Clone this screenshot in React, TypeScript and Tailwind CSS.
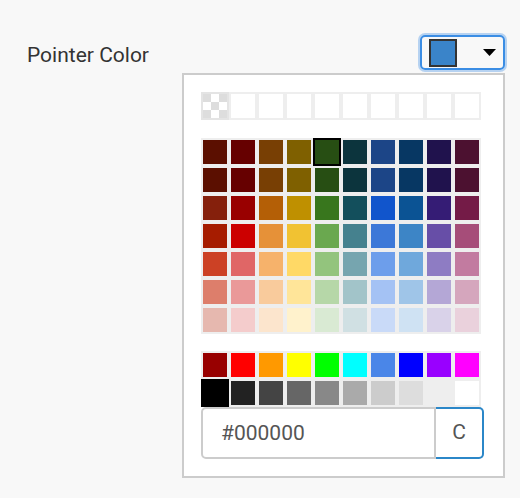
import React from 'react';

const mainRows: string[][] = [
  ['#5b0f00', '#660000', '#783f04', '#7f6000', '#274e13', '#0c343d', '#1c4587', '#073763', '#20124d', '#4c1130'],
  ['#5b0f00', '#660000', '#783f04', '#7f6000', '#274e13', '#0c343d', '#1c4587', '#073763', '#20124d', '#4c1130'],
  ['#85200c', '#990000', '#b45f06', '#bf9000', '#38761d', '#134f5c', '#1155cc', '#0b5394', '#351c75', '#741b47'],
  ['#a61c00', '#cc0000', '#e69138', '#f1c232', '#6aa84f', '#45818e', '#3c78d8', '#3d85c6', '#674ea7', '#a64d79'],
  ['#cc4125', '#e06666', '#f6b26b', '#ffd966', '#93c47d', '#76a5af', '#6d9eeb', '#6fa8dc', '#8e7cc3', '#c27ba0'],
  ['#dd7e6b', '#ea9999', '#f9cb9c', '#ffe599', '#b6d7a8', '#a2c4c9', '#a4c2f4', '#9fc5e8', '#b4a7d6', '#d5a6bd'],
  ['#e6b8af', '#f4cccc', '#fce5cd', '#fff2cc', '#d9ead3', '#d0e0e3', '#c9daf8', '#cfe2f3', '#d9d2e9', '#ead1dc'],
];

const brightRow = ['#980000', '#ff0000', '#ff9900', '#ffff00', '#00ff00', '#00ffff', '#4a86e8', '#0000ff', '#9900ff', '#ff00ff'];
const grayRow = ['#000000', '#222222', '#444444', '#666666', '#888888', '#aaaaaa', '#cccccc', '#dddddd', '#eeeeee', '#ffffff'];

// a 28px cell: 2px frame round a 24px swatch
const Swatch = ({ color, selected }: { color: string; selected?: boolean }) => (
  <div
    className={`w-[28px] h-[28px] border-2 ${selected ? 'border-black' : 'border-[#eeeeee]'}`}
    style={{ backgroundColor: color }}
  />
);

const Checker = () => (
  <div className="w-[28px] h-[28px] border-2 border-[#e4e4e4] grid grid-cols-3 grid-rows-3">
    {[0, 1, 2, 3, 4, 5, 6, 7, 8].map((i) => (
      <div key={i} className={i % 2 === 0 ? 'bg-[#dddddd]' : 'bg-white'} />
    ))}
  </div>
);

const PointerColorPage = () => {
  return (
    <div
      className="h-[498px] bg-[#f8f8f8] flex justify-between items-start pl-[27px] pr-[15px] pt-[35px]"
      style={{ fontFamily: 'Roboto, "Liberation Sans", sans-serif' }}
    >
      {/* Label */}
      <span className="text-[21px] leading-[35px] mt-[3px] text-[#333333]">Pointer Color</span>

      {/* Picker trigger + dropdown */}
      <div className="relative">
        <button className="w-[85px] h-[35px] border-2 border-[#3b8de4] rounded-[5px] shadow-[0_0_0_2px_rgba(59,141,228,0.35)] flex items-center justify-between pl-[7px] pr-[7px]">
          <span className="w-[28px] h-[28px] border-2 border-[#333333] bg-[#3a84c9]" />
          <svg width="13" height="7" viewBox="0 0 13 7">
            <path d="M0 0 L13 0 L6.5 7 Z" fill="#000" />
          </svg>
        </button>

        {/* Dropdown */}
        <div className="absolute right-0 top-full mt-[3px] w-[323px] h-[405px] bg-white border-2 border-[#cccccc] pl-[17px] pt-[17px]">
          {/* Transparent / empty row */}
          <div className="grid grid-cols-[repeat(10,28px)] w-[280px]">
            <Checker />
            {[1, 2, 3, 4, 5, 6, 7, 8, 9].map((i) => (
              <Swatch key={i} color="#ffffff" />
            ))}
          </div>

          {/* Main palette */}
          <div className="grid grid-cols-[repeat(10,28px)] w-[280px] mt-[18px]">
            {mainRows.map((row, r) =>
              row.map((c, i) => <Swatch key={`${r}-${i}`} color={c} selected={r === 0 && i === 4} />)
            )}
          </div>

          {/* Bright + grays */}
          <div className="grid grid-cols-[repeat(10,28px)] w-[280px] mt-[17px]">
            {brightRow.map((c) => (
              <Swatch key={c} color={c} />
            ))}
            {grayRow.map((c, i) => (
              <Swatch key={c} color={c} selected={i === 0} />
            ))}
          </div>

          {/* Hex input */}
          <div className="flex w-[283px] h-[52px]">
            <input
              readOnly
              value="#000000"
              className="w-[235px] h-full border-2 border-[#cccccc] rounded-l-[5px] pl-[18px] text-[21px] text-[#555555] bg-white outline-none"
            />
            <button className="w-[48px] h-full border-2 border-l-0 border-[#2b87c8] rounded-r-[5px] text-[21px] text-[#555555] bg-white">
              C
            </button>
          </div>
        </div>
      </div>
    </div>
  );
};

export default PointerColorPage;
